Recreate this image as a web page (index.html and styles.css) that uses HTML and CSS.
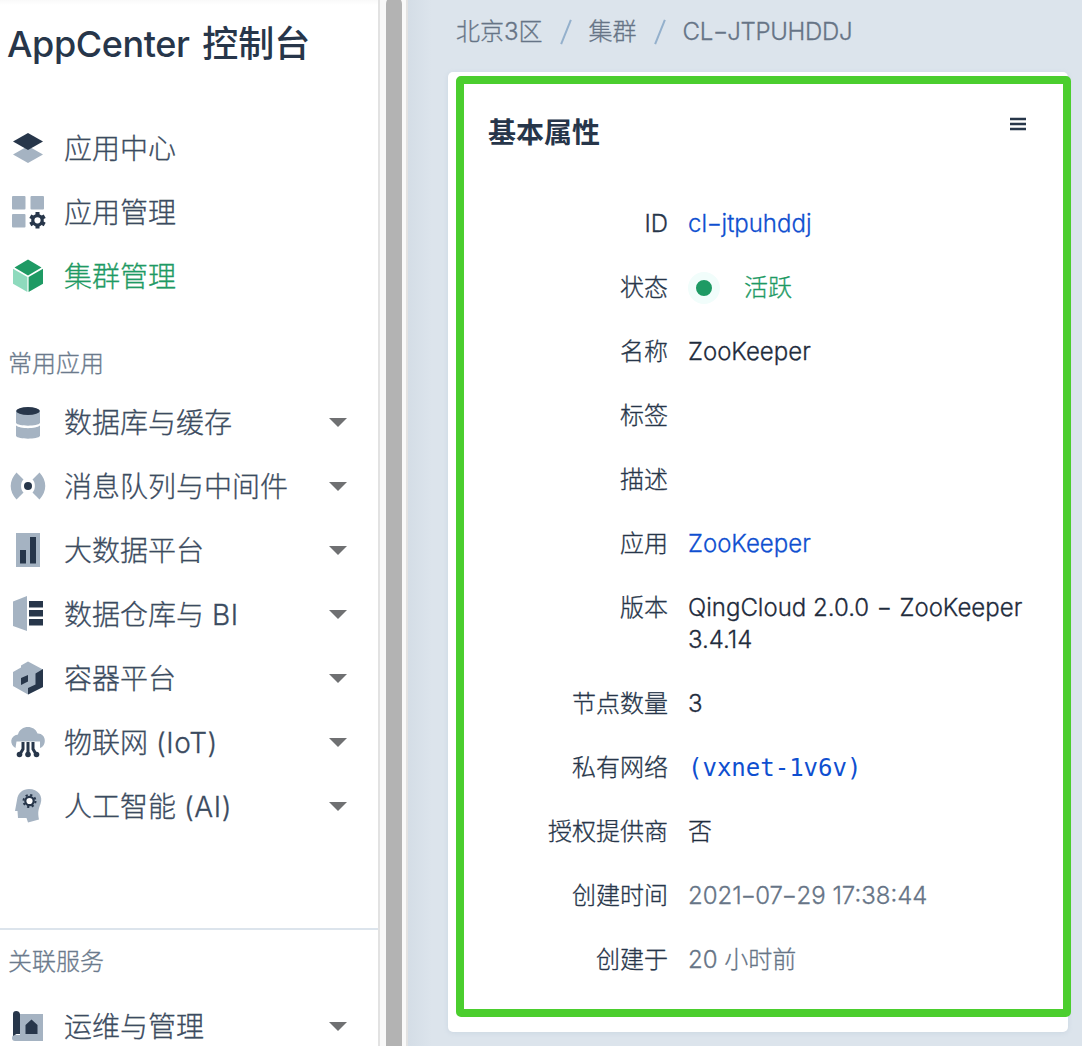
FILE: index.html
```html
<!DOCTYPE html>
<html lang="zh-CN">
<head>
<meta charset="utf-8">
<title>AppCenter 控制台</title>
<link rel="stylesheet" href="styles.css">
</head>
<body>
<div class="app">
  <aside class="sidebar">
    <h1 class="brand"><span class="brand-latin">AppCenter</span> 控制台</h1>
    <nav class="menu menu-main">
      <a class="item"><svg class="icon" viewBox="0 0 40 40"><path class="light" d="M5 26.500 20 18l15 8.500L20 35z"/><path class="dark" d="M5 13.500 20 5l15 8.500L20 22z"/></svg><span>应用中心</span></a>
      <a class="item"><svg class="icon" viewBox="0 0 40 40"><g class="light"><rect x="4" y="4" width="13.500" height="13.500" rx="1"/><rect x="22.500" y="4" width="13.500" height="13.500" rx="1"/><rect x="4" y="22" width="13.500" height="13.500" rx="1"/></g><g class="dark-line"><circle cx="29.500" cy="28.300" r="4.700" stroke-width="3.200"/><path stroke-width="4" d="M29.500 20v3M29.500 33.500v3M22.300 24.200l2.500 1.400M34.200 31l2.500 1.400M22.300 32.400l2.500-1.400M34.200 25.600l2.500-1.400"/></g></svg><span>应用管理</span></a>
      <a class="item active"><svg class="icon" viewBox="0 0 40 40"><path fill="#1e9a64" d="M20 3.500 33.500 11.500 20 19.500 6.500 11.500zM20.600 21 35 12.800v15L20.600 36z"/><path fill="#8edabd" d="M5 12.800 19.400 21v15L5 27.800z"/></svg><span>集群管理</span></a>
    </nav>
    <h2 class="label">常用应用</h2>
    <nav class="menu menu-apps">
      <a class="item"><svg class="icon" viewBox="0 0 40 40"><path class="light" d="M8 8.500h24V21c-2 3.500-22 3.500-24 0zM8 23.500c4 3.500 20 3.500 24 0V34c-2 3.500-22 3.500-24 0z"/><ellipse class="dark" cx="20" cy="9" rx="11.800" ry="4"/></svg><span>数据库与缓存</span><i class="caret"></i></a>
      <a class="item"><svg class="icon" viewBox="0 0 40 40"><path class="light" d="M8.500 6.500C.8 14.500.8 25.500 8.500 33.500l7-7C12.300 24 12.300 16 15.500 13.500zM31.500 6.500c7.700 8 7.700 19 0 27l-7-7c3.200-2.500 3.200-10.500 0-13z"/><circle class="dark" cx="20" cy="20" r="4"/></svg><span>消息队列与中间件</span><i class="caret"></i></a>
      <a class="item"><svg class="icon" viewBox="0 0 40 40"><path class="light" d="M8 3h24v34H8z"/><path class="dark" d="M12 20h6v13.500h-6zM22 7h6v26.500h-6z"/></svg><span>大数据平台</span><i class="caret"></i></a>
      <a class="item"><svg class="icon" viewBox="0 0 40 40"><path class="light" d="M5 7.500 19 2v35L5 32z"/><path class="dark" d="M21 7h14v6.500H21zM21 16h14v6.500H21zM21 25h14v6.500H21z"/></svg><span>数据仓库与 <b class="latin">BI</b></span><i class="caret"></i></a>
      <a class="item"><svg class="icon" viewBox="0 0 40 40"><path class="light" d="M5 14 13 9.500V7.500L20 3.500l15 8V29L20 36.500 5 28z"/><path class="dark" d="m35 11-7.500 4.500v11L20 30v6.500L35 29zM13 20l7-3v6.500L13 27z"/></svg><span>容器平台</span><i class="caret"></i></a>
      <a class="item"><svg class="icon" viewBox="0 0 40 40"><path class="light" d="M7.500 26C1.500 22.500 1.500 14 10 12.500 12 3.500 26 2 29.500 11.500 38 11 39.500 23.500 32 26v-6.500H8.500z"/><path class="dark-line" stroke-width="3" d="M15 20v7l-3.500 6M20 20v13M25 20v7l3.500 6"/><g class="dark"><circle cx="11.500" cy="32.500" r="2.800"/><circle cx="20" cy="32.500" r="2.800"/><circle cx="28.500" cy="32.500" r="2.800"/></g></svg><span>物联网 <b class="latin">(IoT)</b></span><i class="caret"></i></a>
      <a class="item"><svg class="icon" viewBox="0 0 40 40"><path class="light" d="M9 14C10 6.500 15 3 21 3c9 0 14.500 7 11.500 15-2 5-3 8.500-1.500 15.500L20 36.500 18.500 32H10l-.5-7H7z"/><circle cx="21.500" cy="15" r="3.500" fill="#fff"/><circle class="dark-line" cx="21.500" cy="15" r="4.200" stroke-width="2.200"/><circle class="dark-line" cx="21.500" cy="15" r="6" stroke-width="2" stroke-dasharray="2.200 2.510"/></svg><span>人工智能 <b class="latin">(AI)</b></span><i class="caret"></i></a>
    </nav>
    <section class="related">
      <h2 class="label">关联服务</h2>
      <nav class="menu menu-related">
        <a class="item"><svg class="icon" viewBox="0 0 40 40"><path class="light" d="M12 8h23v27H7a3 3 0 0 1 0-6h5z"/><path class="dark" d="M5 8q0-3 3.200-3T12 8v20H8.500L5 30zM17.500 19l6-5.500 6 5.500v9h-12z"/></svg><span>运维与管理</span><i class="caret"></i></a>
      </nav>
    </section>
  </aside>
  <div class="scrollbar"><div class="thumb"></div></div>
  <main class="content">
    <div class="crumbs"><span>北京3区</span><i class="slash"></i><span>集群</span><i class="slash"></i><span class="crumb-id">CL<b class="dash">-</b>JTPUHDDJ</span></div>
    <section class="card">
      <div class="highlight">
        <header class="card-head"><h3>基本属性</h3><svg class="burger" viewBox="0 0 18 14"><path d="M1 2h16M1 7h16M1 12h16"/></svg></header>
        <dl class="props">
          <dt>ID</dt><dd class="link">cl<b class="dash">-</b>jtpuhddj</dd>
          <dt>状态</dt><dd class="status"><i class="dot"></i>活跃</dd>
          <dt>名称</dt><dd>ZooKeeper</dd>
          <dt>标签</dt><dd></dd>
          <dt>描述</dt><dd></dd>
          <dt>应用</dt><dd class="link">ZooKeeper</dd>
          <dt>版本</dt><dd><div>QingCloud 2.0.0 <b class="dash wide">-</b> <span>ZooKeeper</span></div><div>3.4.14</div></dd>
          <dt>节点数量</dt><dd>3</dd>
          <dt>私有网络</dt><dd class="link mono">(vxnet-1v6v)</dd>
          <dt>授权提供商</dt><dd>否</dd>
          <dt>创建时间</dt><dd class="muted date">2021<b class="dash">-</b>07<b class="dash">-</b>29 17:38:44</dd>
          <dt>创建于</dt><dd class="muted">20 小时前</dd>
        </dl>
      </div>
    </section>
  </main>
</div>
</body>
</html>
```

FILE: styles.css
```css
* { box-sizing: border-box; }
body {
  margin: 0;
  font-family: Inter, "Noto Sans CJK SC", sans-serif;
  font-weight: 300;
  color: #27364a;
  -webkit-text-stroke: 0.3px currentColor;
}
h1, h2, h3, dl, dd { margin: 0; }
.app { display: flex; height: 1046px; overflow: hidden; background: #dce4ec; }

.sidebar { flex: none; width: 378px; background: linear-gradient(#f9f9f9, #fff 5px); }
.brand { height: 88px; padding-left: 7px; font-size: 36px; line-height: 88px; font-weight: 500; white-space: nowrap; -webkit-text-stroke: 0; }
.brand-latin { margin-right: 3px; letter-spacing: -0.4px; }
.menu-main { padding-top: 28px; }
.item { display: flex; align-items: center; height: 64px; padding: 0 31px 0 8px; font-size: 28px; line-height: 40px; color: #3b4b60; white-space: nowrap; }
.item > span { flex: 1; margin-left: 16px; padding-top: 2px; }
.latin { font-weight: inherit; letter-spacing: 0.6px; }
.icon { flex: none; width: 40px; height: 40px; }
.light { fill: #a5b3c2; }
.dark { fill: #27364a; }
.dark-line { fill: none; stroke: #27364a; }
.item.active { color: #1e9a64; }
.caret { border: solid transparent; border-width: 9px 9px 0; border-top-color: #6f7072; }
.label { padding-left: 8px; font-size: 24px; line-height: 36px; font-weight: 300; color: #6b7a8c; }
.menu-main + .label { margin-top: 38px; }
.menu-apps { padding-top: 8px; }
.related { margin-top: 90px; padding-top: 14px; border-top: 2px solid #dce4ec; }
.menu-related { padding-top: 14px; }

.scrollbar { flex: none; width: 30px; padding: 0 4px 0 6px; background: #f9f9f9; border: solid #e2e2e2; border-width: 0 2px; }
.thumb { width: 16px; height: 1060px; margin-top: -4px; border-radius: 8px; background: #b3b3b3; }

.content { flex: 1; padding: 0 14px 0 40px; background: linear-gradient(90deg, #d4dde6, #dce4ec 24px); }
.crumbs { display: flex; align-items: center; height: 72px; padding: 0 0 8px 8px; font-size: 24px; line-height: 36px; color: #667486; }
.crumb-id { letter-spacing: -0.3px; }
.slash { width: 2px; height: 26px; margin: 0 22px; background: #94b0cc; transform: rotate(22deg); }
.dash { display: inline-block; margin: 0 1.8px; font-weight: inherit; transform: scaleX(1.4); }
.date .dash { margin: 0 1.3px; }
.dash.wide { margin: 0 3px; }
.card { width: 620px; height: 960px; padding: 4px 0 15px 8px; border-radius: 5px; background: #fff; box-shadow: 0 1px 5px rgba(140, 165, 190, 0.2); }
.highlight { width: 615px; height: 941px; border: 8px solid #4bce2e; border-radius: 5px; }
.card-head { display: flex; justify-content: space-between; height: 108px; padding: 29px 36px 0 24px; }
.card-head h3 { font-size: 28px; line-height: 40px; font-weight: 700; -webkit-text-stroke: 0; }
.burger { width: 18px; height: 14px; margin-top: 4px; fill: none; stroke: #27364a; stroke-width: 2.600; }
.props { display: grid; grid-template-columns: 204px 345px; column-gap: 20px; row-gap: 32px; padding-top: 16px; font-size: 24px; line-height: 32px; }
.props dt { text-align: right; }
.props dd { min-height: 32px; color: #1f2c3d; white-space: nowrap; }
.props .link { color: #0f4fd0; }
.props .status { display: flex; align-items: center; height: 32px; color: #1e9a64; }
.dot { flex: none; width: 32px; height: 32px; margin-right: 24px; border: 8px solid #f1fdfb; border-radius: 50%; background: #1e9a64; }
.props .muted { color: #667486; }
.props .mono { font-family: "DejaVu Sans Mono", monospace; -webkit-text-stroke: 0; }
```
